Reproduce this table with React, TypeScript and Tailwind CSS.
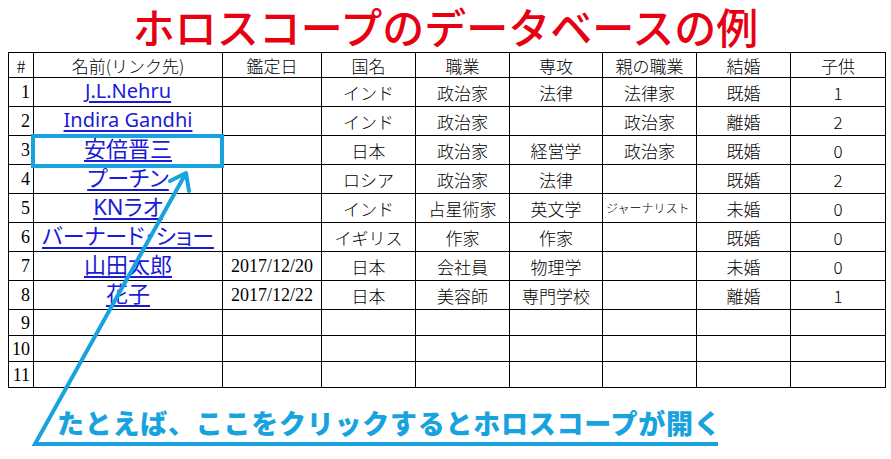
import type { ReactNode } from 'react';

// --- Types ---
interface Person {
  no: number;
  name?: string;
  date?: string;
  country?: string;
  job?: string;
  major?: string;
  parentJob?: string;
  married?: string;
  kids?: string;
}

// --- Constants ---
const JP = "font-['Noto_Sans_CJK_JP',sans-serif]";

const HEADERS = ['#', '名前(リンク先)', '鑑定日', '国名', '職業', '専攻', '親の職業', '結婚', '子供'];
const COL_WIDTHS = ['w-[25px]', 'w-[189px]', 'w-[99px]', 'w-[94px]', 'w-[94px]', 'w-[93px]', 'w-[94px]', 'w-[94px]', 'w-[95px]'];

const PEOPLE: Person[] = [
  { no: 1, name: 'J.L.Nehru', country: 'インド', job: '政治家', major: '法律', parentJob: '法律家', married: '既婚', kids: '1' },
  { no: 2, name: 'Indira Gandhi', country: 'インド', job: '政治家', parentJob: '政治家', married: '離婚', kids: '2' },
  { no: 3, name: '安倍晋三', country: '日本', job: '政治家', major: '経営学', parentJob: '政治家', married: '既婚', kids: '0' },
  { no: 4, name: 'プーチン', country: 'ロシア', job: '政治家', major: '法律', married: '既婚', kids: '2' },
  { no: 5, name: 'KNラオ', country: 'インド', job: '占星術家', major: '英文学', parentJob: 'ジャーナリスト', married: '未婚', kids: '0' },
  { no: 6, name: 'バーナード・ショー', country: 'イギリス', job: '作家', major: '作家', married: '既婚', kids: '0' },
  { no: 7, name: '山田太郎', date: '2017/12/20', country: '日本', job: '会社員', major: '物理学', married: '未婚', kids: '0' },
  { no: 8, name: '花子', date: '2017/12/22', country: '日本', job: '美容師', major: '専門学校', married: '離婚', kids: '1' },
  { no: 9 },
  { no: 10 },
  { no: 11 },
];

// --- Components ---
function Cell({ children, className = '' }: { children?: ReactNode; className?: string }) {
  return <td className={`border border-black p-0 text-center align-middle whitespace-nowrap ${className}`}>{children}</td>;
}

function PersonRow({ p }: { p: Person }) {
  const tall = p.no <= 8;
  // latin-only names are drawn a touch smaller than the kana/kanji ones
  const latin = p.name ? /^[\x20-\x7e]+$/.test(p.name) : false;
  const body = `${JP} text-[17px] font-light leading-none`;

  return (
    <tr className={tall ? 'h-[29px]' : 'h-[26px]'}>
      <Cell className="text-right pr-[3px] font-['Liberation_Serif',serif] text-[18px] leading-none">{p.no}</Cell>
      <Cell>
        {p.name && (
          <a
            href="#"
            className={`text-[#1a1ad8] underline underline-offset-[3px] leading-none font-['Noto_Sans','Noto_Sans_CJK_JP',sans-serif] [font-feature-settings:'palt'] ${
              latin ? 'text-[20px]' : 'text-[22px]'
            }`}
          >
            {p.name}
          </a>
        )}
      </Cell>
      <Cell className="font-['Liberation_Serif',serif] text-[18px] leading-none">{p.date}</Cell>
      <Cell className={body}>{p.country}</Cell>
      <Cell className={body}>{p.job}</Cell>
      <Cell className={body}>{p.major}</Cell>
      <Cell
        className={`${JP} font-light leading-none ${p.parentJob === 'ジャーナリスト' ? 'text-[12px] text-left pl-[3px]' : 'text-[17px]'}`}
      >
        {p.parentJob}
      </Cell>
      <Cell className={body}>{p.married}</Cell>
      <Cell className={body}>{p.kids}</Cell>
    </tr>
  );
}

function Annotation() {
  return (
    <svg className="absolute inset-0 pointer-events-none" width="891" height="459" viewBox="0 0 891 459">
      <rect x="33" y="136" width="189" height="30" fill="none" stroke="#18a3df" strokeWidth="4" />
      <polyline points="186,173 35,444 718,444" fill="none" stroke="#18a3df" strokeWidth="4" strokeLinejoin="miter" />
      <polyline points="170,181 186,173 189,191" fill="none" stroke="#18a3df" strokeWidth="4" strokeLinecap="round" strokeLinejoin="round" />
    </svg>
  );
}

// --- Main Component ---
export default function App() {
  return (
    <div className="relative w-[891px] h-[459px] bg-white overflow-hidden">
      <h1 className={`${JP} h-[52px] text-center text-[42px] leading-[52px] font-medium text-[#e60012]`}>
        ホロスコープのデータベースの例
      </h1>

      <div className="pl-[8px]">
        <table className="table-fixed border-collapse w-[877px] text-black">
          <colgroup>
            {COL_WIDTHS.map((w, i) => (
              <col key={i} className={w} />
            ))}
          </colgroup>
          <thead>
            <tr className="h-[25px]">
              {HEADERS.map((h) => (
                <th key={h} className={`border border-black p-0 text-center font-light text-[17px] leading-none ${JP}`}>
                  {h}
                </th>
              ))}
            </tr>
          </thead>
          <tbody>
            {PEOPLE.map((p) => (
              <PersonRow key={p.no} p={p} />
            ))}
          </tbody>
        </table>
      </div>

      <p className={`${JP} mt-[19px] pl-[57px] text-[27px] leading-[32px] font-black text-[#18a3df] tracking-[0.75px]`}>
        たとえば、ここをクリックするとホロスコープが開く
      </p>

      <Annotation />
    </div>
  );
}
